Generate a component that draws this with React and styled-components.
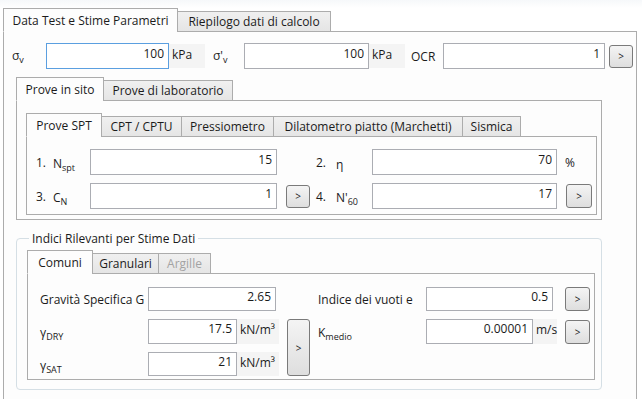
import React from 'react';
import styled, { createGlobalStyle } from 'styled-components';

const GlobalStyle = createGlobalStyle`
  html, body { margin: 0; padding: 0; background: #fff; }
  body {
    font-family: "Open Sans", "Noto Sans", sans-serif;
    font-size: 12px;
    color: #1b1b1b;
  }
  * { box-sizing: border-box; }
`;

const Page = styled.div`
  width: 642px;
  height: 399px;
  overflow: hidden;
  display: flex;
  flex-direction: column;
  padding: 8px 5px 0 3px;
  background: linear-gradient(#f6f8fa, #fff 8px);
`;

const TabStrip = styled.div`
  display: flex;
  align-items: flex-end;
  position: relative;
  z-index: 1;
  margin-bottom: -1px;
`;

const Tab = styled.div`
  width: ${p => p.$w}px;
  height: ${p => (p.$active ? 24 : 21)}px;
  display: flex;
  align-items: center;
  justify-content: center;
  white-space: nowrap;
  border: 1px solid #acacac;
  border-bottom: ${p => (p.$active ? '1px solid #fdfdfd' : '1px solid #acacac')};
  background: ${p => (p.$active ? '#fdfdfd' : 'linear-gradient(#f0f0f0, #e5e5e5)')};
  color: ${p => (p.$disabled ? '#a3a3a3' : '#1b1b1b')};
  & + & { margin-left: -1px; }
`;

const Panel = styled.div`
  border: 1px solid #acacac;
  background: #fdfdfd;
  width: ${p => (p.$w ? `${p.$w}px` : 'auto')};
  height: ${p => (p.$h ? `${p.$h}px` : 'auto')};
  padding: ${p => p.$pad || '0'};
`;

const OuterPanel = styled(Panel)`
  flex: 1;
  border-bottom: none;
`;

const TopRow = styled.div`
  display: flex;
  align-items: center;
  margin-top: 11px;
  padding-left: 8px;
`;

const Label = styled.div`
  width: ${p => p.$w}px;
  flex: none;
  white-space: nowrap;
  padding-top: ${p => p.$dy || 0}px;
  padding-left: ${p => p.$pl || 0}px;
  grid-column: ${p => p.$col || 'auto'};
`;

const Sub = styled.span`
  font-size: 9px;
  vertical-align: -3px;
`;

const Input = styled.input`
  width: ${p => p.$w}px;
  height: ${p => p.$h || 26}px;
  flex: none;
  border: 1px solid ${p => (p.$focus ? '#5b9fe0' : '#abadb3')};
  background: #fff;
  text-align: right;
  padding: 0 4px 6px 0;
  font: inherit;
  color: #1b1b1b;
  outline: none;
`;

const Unit = styled.div`
  width: ${p => p.$w}px;
  height: ${p => p.$h || 24}px;
  flex: none;
  background: #f4f4f4;
  padding: 2px 0 0 3px;
  white-space: nowrap;
`;

const SmallButton = styled.button`
  width: ${p => p.$w || 24}px;
  height: ${p => p.$h || 23}px;
  flex: none;
  margin-left: ${p => p.$ml || 0}px;
  margin-right: ${p => p.$mr || 0}px;
  border: 1px solid #7a7a7a;
  border-radius: 3px;
  background: linear-gradient(#f4f4f4, #dedede);
  font: inherit;
  font-size: 10px;
  color: #222;
  padding: 0;
  grid-row: ${p => p.$row || 'auto'};
  grid-column: ${p => p.$col || 'auto'};
`;

const SubSection = styled.div`
  margin: 8px 0 0 12px;
`;

const SptRow = styled.div`
  display: flex;
  align-items: center;
  height: 26px;
  & + & { margin-top: 8px; }
`;

const Gap = styled.div`
  width: ${p => p.$w}px;
  flex: none;
`;

const Group = styled.fieldset`
  margin: 10px 0 0 12px;
  width: 586px;
  height: 160px;
  border: 1px solid #d5dfe5;
  border-radius: 4px;
  padding: 1px 6px 5px 10px;
  & > legend {
    padding: 0 3px;
    margin-left: 2px;
  }
`;

const FieldGrid = styled.div`
  display: grid;
  grid-template-columns: 100px 131px 23px 100px 131px 25px;
  grid-template-rows: 24px 25px 24px;
  column-gap: 8px;
  row-gap: 8px;
  align-items: center;
`;

const Field = styled.div`
  display: flex;
  align-items: center;
`;

export default function App() {
  return (
    <Page>
      <GlobalStyle />
      <TabStrip>
        <Tab $active $w={175}>Data Test e Stime Parametri</Tab>
        <Tab $w={154}>Riepilogo dati di calcolo</Tab>
      </TabStrip>
      <OuterPanel>
        <TopRow>
          <Label $w={34}>σ<Sub>v</Sub></Label>
          <Input $w={123} $focus readOnly value="100" />
          <Unit $w={36}>kPa</Unit>
          <Label $w={39} $pl={8}>σ'<Sub>v</Sub></Label>
          <Input $w={125} readOnly value="100" />
          <Unit $w={36}>kPa</Unit>
          <Label $w={38} $pl={6}>OCR</Label>
          <Input $w={162} readOnly value="1" />
          <SmallButton $ml={4}>&gt;</SmallButton>
        </TopRow>

        <SubSection>
          <TabStrip>
            <Tab $active $w={88}>Prove in sito</Tab>
            <Tab $w={130}>Prove di laboratorio</Tab>
          </TabStrip>
          <Panel $w={586} $h={120} $pad="12px 4px 4px 9px">
            <TabStrip>
              <Tab $active $w={76}>Prove SPT</Tab>
              <Tab $w={81}>CPT / CPTU</Tab>
              <Tab $w={93}>Pressiometro</Tab>
              <Tab $w={190}>Dilatometro piatto (Marchetti)</Tab>
              <Tab $w={59}>Sismica</Tab>
            </TabStrip>
            <Panel $w={571} $h={79} $pad="12px 0 0 9px">
              <SptRow>
                <Label $w={17}>1.</Label>
                <Label $w={37} $dy={4}>N<Sub>spt</Sub></Label>
                <Input $w={187} readOnly value="15" />
                <Gap $w={39} />
                <Label $w={20}>2.</Label>
                <Label $w={36} $dy={4}>η</Label>
                <Input $w={185} readOnly value="70" />
                <Label $w={20} $pl={8}>%</Label>
              </SptRow>
              <SptRow>
                <Label $w={17}>3.</Label>
                <Label $w={37} $dy={4}>C<Sub>N</Sub></Label>
                <Input $w={187} readOnly value="1" />
                <SmallButton $ml={9} $mr={6}>&gt;</SmallButton>
                <Label $w={20}>4.</Label>
                <Label $w={36} $dy={4}>N'<Sub>60</Sub></Label>
                <Input $w={185} readOnly value="17" />
                <SmallButton $ml={9} $w={26} $h={24}>&gt;</SmallButton>
              </SptRow>
            </Panel>
          </Panel>
        </SubSection>

        <Group>
          <legend>Indici Rilevanti per Stime Dati</legend>
          <TabStrip style={{ marginTop: 2 }}>
            <Tab $active $w={66}>Comuni</Tab>
            <Tab $w={67}>Granulari</Tab>
            <Tab $w={53} $disabled>Argille</Tab>
          </TabStrip>
          <Panel $w={568} $h={107} $pad="13px 0 0 12px">
            <FieldGrid>
              <Label $w={100}>Gravità Specifica G</Label>
              <Field><Input $w={128} $h={24} readOnly value="2.65" /></Field>
              <div />
              <Label $w={100}>Indice dei vuoti e</Label>
              <Field><Input $w={127} $h={24} readOnly value="0.5" /></Field>
              <SmallButton $w={25} $h={24}>&gt;</SmallButton>

              <Label $w={100} $dy={4}>γ<Sub>DRY</Sub></Label>
              <Field>
                <Input $w={89} $h={25} readOnly value="17.5" />
                <Unit $w={42} $h={25}>kN/m³</Unit>
              </Field>
              <SmallButton $w={23} $h={57} $col={3} $row="2 / span 2">&gt;</SmallButton>
              <Label $w={100} $dy={4}>K<Sub>medio</Sub></Label>
              <Field>
                <Input $w={107} $h={25} readOnly value="0.00001" />
                <Unit $w={24} $h={25}>m/s</Unit>
              </Field>
              <SmallButton $w={25} $h={24}>&gt;</SmallButton>

              <Label $w={100} $dy={4} $col={1}>γ<Sub>SAT</Sub></Label>
              <Field>
                <Input $w={89} $h={24} readOnly value="21" />
                <Unit $w={42} $h={24}>kN/m³</Unit>
              </Field>
            </FieldGrid>
          </Panel>
        </Group>
      </OuterPanel>
    </Page>
  );
}
